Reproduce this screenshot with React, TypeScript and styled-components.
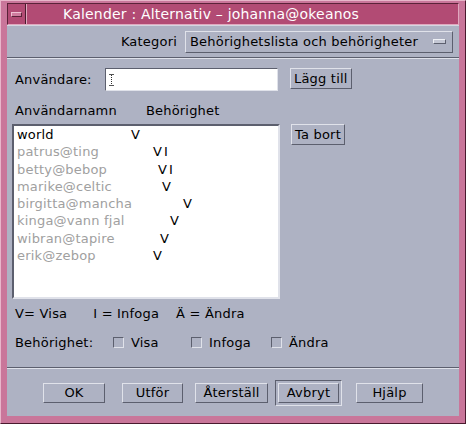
import React from 'react';
import styled, {createGlobalStyle} from 'styled-components';

const GlobalStyle = createGlobalStyle`
  html, body {
    margin: 0;
    padding: 0;
    background: #aeb2c3;
  }
  body {
    font-family: 'DejaVu Sans', 'Liberation Sans', sans-serif;
  }
`;

// lista över användare och deras behörighet
const users = [
  {name: 'world', perm: 'V', indent: 114, dim: false},
  {name: 'patrus@ting', perm: 'VI', indent: 136, dim: true},
  {name: 'betty@bebop', perm: 'VI', indent: 141, dim: true},
  {name: 'marike@celtic', perm: 'V', indent: 145, dim: true},
  {name: 'birgitta@mancha', perm: 'V', indent: 166, dim: true},
  {name: 'kinga@vann fjal', perm: 'V', indent: 153, dim: true},
  {name: 'wibran@tapire', perm: 'V', indent: 143, dim: true},
  {name: 'erik@zebop', perm: 'V', indent: 136, dim: true},
];

const App = () => {
  return (
    <>
      <GlobalStyle />
      <Frame>
        <TitleBar>
          <MenuBox>
            <MenuBar />
          </MenuBox>
          <Title>Kalender : Alternativ – johanna@okeanos</Title>
        </TitleBar>
        <Client>
          <CategoryRow>
            <Label>Kategori</Label>
            <Dropdown>
              <span>Behörighetslista och behörigheter</span>
              <DropIndicator />
            </Dropdown>
          </CategoryRow>
          <Separator />
          <Body>
            <UserRow>
              <Label>Användare:</Label>
              <TextField>
                <Caret />
              </TextField>
              <Button>Lägg till</Button>
            </UserRow>
            <HeaderRow>
              <span>Användarnamn</span>
              <span>Behörighet</span>
            </HeaderRow>
            <ListRow>
              <ListBox>
                {users.map((u) => (
                  <ListItem key={u.name} $dim={u.dim}>
                    <NameCell>{u.name}</NameCell>
                    <PermCell style={{left: u.indent}}>{u.perm}</PermCell>
                  </ListItem>
                ))}
              </ListBox>
              <Button>Ta bort</Button>
            </ListRow>
            <Legend>
              <span>V= Visa</span>
              <span>I = Infoga</span>
              <span>Ä = Ändra</span>
            </Legend>
            <PermRow>
              <Label>Behörighet:</Label>
              <CheckItem $width={78}>
                <CheckBox />
                Visa
              </CheckItem>
              <CheckItem $width={80}>
                <CheckBox />
                Infoga
              </CheckItem>
              <CheckItem $width={70}>
                <CheckBox />
                Ändra
              </CheckItem>
            </PermRow>
          </Body>
          <Separator />
          <ButtonBar>
            <Button $width={62} $gap={17}>OK</Button>
            <Button $width={61} $gap={12}>Utför</Button>
            <Button $width={73} $gap={7}>Återställ</Button>
            <DefaultRing>
              <Button $width={61}>Avbryt</Button>
            </DefaultRing>
            <Button $width={67} $lead={14}>Hjälp</Button>
          </ButtonBar>
        </Client>
      </Frame>
    </>
  );
};

export default App;

const Frame = styled.div`
  box-sizing: border-box;
  width: 466px;
  height: 424px;
  background: #c9769a;
  border-top: 1px solid #e8b6ca;
  border-left: 1px solid #e8b6ca;
  border-right: 1px solid #4a1a2e;
  border-bottom: 1px solid #4a1a2e;
  padding: 2px 6px 7px 6px;
  display: flex;
  flex-direction: column;
`;

const TitleBar = styled.div`
  height: 20px;
  display: flex;
  align-items: stretch;
  background: #b24b74;
  border-top: 1px solid #5a2238;
  border-left: 1px solid #5a2238;
  border-bottom: 1px solid #e0a8be;
  border-right: 1px solid #e0a8be;
`;

const MenuBox = styled.div`
  width: 17px;
  display: flex;
  align-items: center;
  justify-content: center;
  border-right: 1px solid #4a1a2e;
`;

const MenuBar = styled.div`
  width: 9px;
  height: 3px;
  background: #cf7c9e;
  border-top: 1px solid #f0c0d2;
  border-left: 1px solid #f0c0d2;
  border-bottom: 1px solid #5a2238;
  border-right: 1px solid #5a2238;
`;

const Title = styled.div`
  flex: 1;
  color: #ffffff;
  font-size: 14px;
  line-height: 20px;
  padding-left: 36px;
  border-left: 1px solid #e0a8be;
  letter-spacing: 0.2px;
`;

const Client = styled.div`
  flex: 1;
  background: #aeb2c3;
  border-top: 1px solid #d4d6e0;
  display: flex;
  flex-direction: column;
  color: #000;
  font-size: 13px;
`;

const Label = styled.span`
  font-size: 13px;
  color: #000;
  letter-spacing: 0.2px;
`;

const CategoryRow = styled.div`
  height: 31px;
  display: flex;
  align-items: center;
  justify-content: flex-end;
  gap: 8px;
  padding-right: 6px;
`;

const Dropdown = styled.div`
  box-sizing: border-box;
  width: 268px;
  height: 22px;
  display: flex;
  align-items: center;
  justify-content: space-between;
  padding: 0 6px 0 4px;
  font-size: 13px;
  letter-spacing: 0.2px;
  border-top: 1px solid #e0e2ea;
  border-left: 1px solid #e0e2ea;
  border-bottom: 1px solid #5c5f6e;
  border-right: 1px solid #5c5f6e;
`;

const DropIndicator = styled.div`
  width: 11px;
  height: 3px;
  background: #c4c7d4;
  border-top: 1px solid #eef0f5;
  border-left: 1px solid #eef0f5;
  border-bottom: 1px solid #5c5f6e;
  border-right: 1px solid #5c5f6e;
`;

const Separator = styled.div`
  height: 0;
  border-top: 1px solid #5c5f6e;
  border-bottom: 1px solid #dfe1ea;
`;

const Body = styled.div`
  flex: 1;
  display: flex;
  flex-direction: column;
  padding: 9px 0 0 8px;
`;

const UserRow = styled.div`
  display: flex;
  align-items: flex-start;
  height: 34px;
  ${Label} {
    width: 90px;
    line-height: 23px;
  }
`;

const TextField = styled.div`
  box-sizing: border-box;
  width: 173px;
  height: 23px;
  background: #ffffff;
  border-top: 1px solid #5c5f6e;
  border-left: 1px solid #5c5f6e;
  border-bottom: 1px solid #e0e2ea;
  border-right: 1px solid #e0e2ea;
  margin-right: 12px;
  display: flex;
  align-items: center;
  padding-left: 5px;
`;

const Caret = styled.div`
  width: 1px;
  height: 12px;
  border-left: 1px dotted #333;
  position: relative;
  &::before,
  &::after {
    content: '';
    position: absolute;
    left: -3px;
    width: 5px;
    border-top: 1px solid #555;
  }
  &::before {
    top: 0;
  }
  &::after {
    bottom: 0;
  }
`;

const Button = styled.div<{$width?: number; $gap?: number; $lead?: number}>`
  box-sizing: border-box;
  width: ${(p) => (p.$width ? `${p.$width}px` : 'auto')};
  height: 21px;
  padding: 0 3px;
  margin-right: ${(p) => p.$gap ?? 0}px;
  margin-left: ${(p) => p.$lead ?? 0}px;
  display: flex;
  align-items: center;
  justify-content: center;
  font-size: 13px;
  letter-spacing: 0.2px;
  color: #000;
  background: #aeb2c3;
  border-top: 1px solid #e0e2ea;
  border-left: 1px solid #e0e2ea;
  border-bottom: 1px solid #5c5f6e;
  border-right: 1px solid #5c5f6e;
`;

const HeaderRow = styled.div`
  display: flex;
  gap: 29px;
  height: 21px;
  align-items: flex-start;
  letter-spacing: 0.2px;
  padding-top: 1px;
`;

const ListRow = styled.div`
  display: flex;
  align-items: flex-start;
  gap: 11px;
  margin-left: -3px;
`;

const ListBox = styled.div`
  box-sizing: border-box;
  width: 268px;
  height: 175px;
  background: #ffffff;
  border-top: 2px solid #5c5f6e;
  border-left: 2px solid #5c5f6e;
  border-bottom: 2px solid #e0e2ea;
  border-right: 2px solid #e0e2ea;
  padding: 0 0 0 3px;
  display: flex;
  flex-direction: column;
`;

const ListItem = styled.div<{$dim: boolean}>`
  position: relative;
  height: 17.3px;
  line-height: 17px;
  font-size: 13px;
  letter-spacing: 0.2px;
  color: ${(p) => (p.$dim ? '#a0a0a0' : '#000')};
`;

const NameCell = styled.span`
  white-space: nowrap;
`;

const PermCell = styled.span`
  position: absolute;
  top: 0;
  color: #000;
  letter-spacing: 2px;
`;

const Legend = styled.div`
  display: flex;
  gap: 26px;
  height: 27px;
  align-items: center;
  margin-top: 1px;
  letter-spacing: 0.2px;
  span:nth-child(3) {
    margin-left: -9px;
  }
`;

const PermRow = styled.div`
  display: flex;
  align-items: center;
  height: 30px;
  ${Label} {
    width: 98px;
  }
`;

const CheckItem = styled.div<{$width: number}>`
  width: ${(p) => p.$width}px;
  display: flex;
  align-items: center;
  gap: 7px;
  letter-spacing: 0.2px;
`;

const CheckBox = styled.div`
  box-sizing: border-box;
  width: 11px;
  height: 11px;
  border-top: 1px solid #5c5f6e;
  border-left: 1px solid #5c5f6e;
  border-bottom: 1px solid #e0e2ea;
  border-right: 1px solid #e0e2ea;
`;

const ButtonBar = styled.div`
  height: 47px;
  display: flex;
  align-items: center;
  padding-left: 36px;
  ${Button} {
    height: 20px;
  }
`;

const DefaultRing = styled.div`
  padding: 2px;
  border-top: 1px solid #5c5f6e;
  border-left: 1px solid #5c5f6e;
  border-bottom: 1px solid #e0e2ea;
  border-right: 1px solid #e0e2ea;
`;
